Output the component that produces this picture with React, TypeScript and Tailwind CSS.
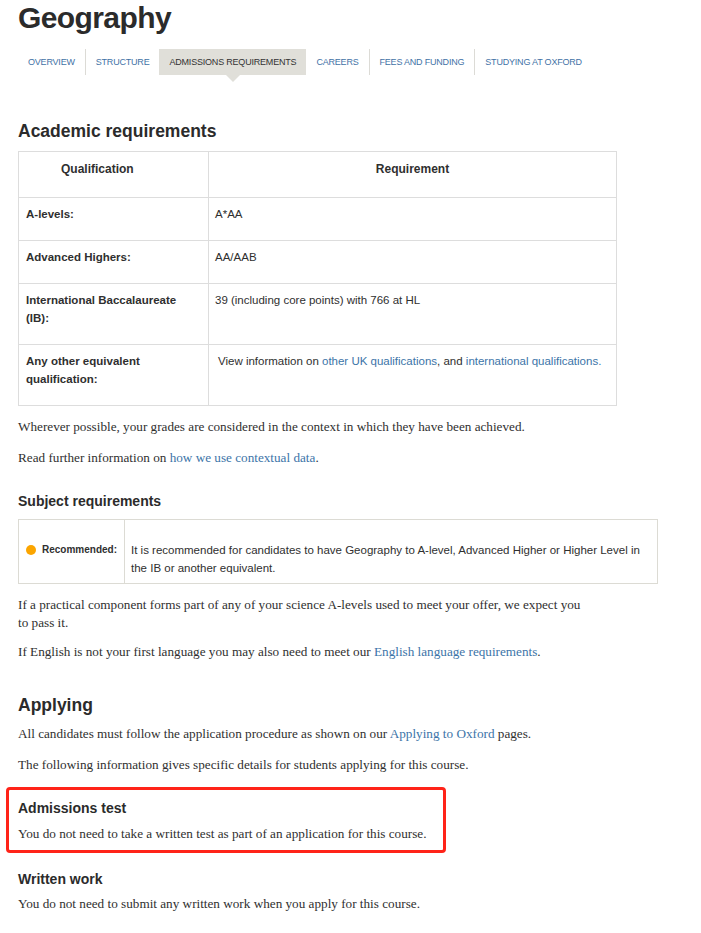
const sans = "font-['Liberation_Sans',Arial,sans-serif]";
const serif = "font-['Liberation_Serif','Times_New_Roman',serif]";

const tabs = [
  { label: "Overview", sep: true },
  { label: "Structure", sep: false },
  { label: "Admissions requirements", active: true, sep: false },
  { label: "Careers", sep: true },
  { label: "Fees and funding", sep: true },
  { label: "Studying at Oxford", sep: false },
];

const rows = [
  { q: ["A-levels:"], r: <>A*AA</>, h: "h-[43px]" },
  { q: ["Advanced Highers:"], r: <>AA/AAB</>, h: "h-[43px]" },
  {
    q: ["International Baccalaureate", "(IB):"],
    r: <>39 (including core points) with 766 at HL</>,
    h: "h-[61px]",
  },
  {
    q: ["Any other equivalent", "qualification:"],
    r: (
      <span className="pl-[3px]">
        View information on <a className="text-[#3c74a8]">other UK qualifications</a>, and{" "}
        <a className="text-[#3c74a8]">international qualifications.</a>
      </span>
    ),
    h: "h-[61px]",
  },
];

function Link({ children }: { children: React.ReactNode }) {
  return <a className="text-[#3c74a8] cursor-pointer">{children}</a>;
}

export default function App() {
  return (
    <div className="min-h-screen bg-white text-[#2f2f2f] pl-[18px] pr-4">
      <h1 className={`${sans} text-[30px] font-bold leading-[36px] tracking-[-0.6px] text-[#2b2b2b]`}>
        Geography
      </h1>

      {/* course tabs */}
      <nav className={`${sans} mt-[13px] flex h-[26px] items-stretch`}>
        {tabs.map((t) => (
          <div key={t.label} className="flex items-stretch">
            <div
              className={`relative flex items-center px-[10px] pt-px text-[9px] tracking-[-0.2px] uppercase ${
                t.active ? "bg-[#e0dfd9] text-[#333]" : "text-[#3f72a6]"
              }`}
            >
              {t.label}
              {t.active && (
                <span className="absolute left-1/2 top-full -translate-x-1/2 border-x-[7px] border-t-[7px] border-x-transparent border-t-[#e0dfd9]" />
              )}
            </div>
            {t.sep && <div className="w-px bg-[#dcdbd6]" />}
          </div>
        ))}
      </nav>

      <h2 className={`${sans} mt-[44px] text-[17.5px] font-bold leading-[24px] text-[#2b2b2b]`}>
        Academic requirements
      </h2>

      <table className={`${sans} mt-[8px] w-[599px] border-collapse text-[11.5px] leading-[18px]`}>
        <thead>
          <tr className="h-[46px]">
            <th className="w-[190px] border border-[#dddddd] pl-[24px] pt-[8px] text-left align-top text-[12px] font-bold">
              <span className="ml-[18px]">Qualification</span>
            </th>
            <th className="border border-[#dddddd] pt-[8px] text-center align-top text-[12px] font-bold">
              Requirement
            </th>
          </tr>
        </thead>
        <tbody>
          {rows.map((row) => (
            <tr key={row.q[0]} className={row.h}>
              <td className="border border-[#dddddd] px-[7px] pt-[7px] align-top font-bold">
                {row.q.map((l) => (
                  <div key={l}>{l}</div>
                ))}
              </td>
              <td className="border border-[#dddddd] px-[6px] pt-[7px] align-top">{row.r}</td>
            </tr>
          ))}
        </tbody>
      </table>

      <div className={`${serif} text-[13.2px] leading-[18px]`}>
        <p className="mt-[12px]">
          Wherever possible, your grades are considered in the context in which they have been achieved.
        </p>
        <p className="mt-[13px]">
          Read further information on <Link>how we use contextual data</Link>.
        </p>
      </div>

      <h3 className={`${sans} mt-[23px] text-[14px] font-bold leading-[22px] text-[#2b2b2b]`}>
        Subject requirements
      </h3>

      <table className={`${sans} mt-[7px] w-[640px] border-collapse text-[11.5px] leading-[18px]`}>
        <tbody>
          <tr className="h-[64px]">
            <td className="w-[106px] border border-[#dcdbd4] pl-[7px] pt-[21px] align-top">
              <div className="flex items-center gap-[6px] text-[10px] font-bold">
                <span className="h-[10px] w-[10px] rounded-full bg-[#fba500]" />
                Recommended:
              </div>
            </td>
            <td className="border border-[#dcdbd4] pl-[6px] pt-[21px] pb-[6px] align-top">
              It is recommended for candidates to have Geography to A-level, Advanced Higher or Higher Level in
              <br />
              the IB or another equivalent.
            </td>
          </tr>
        </tbody>
      </table>

      <div className={`${serif} text-[13.2px] leading-[18px]`}>
        <p className="mt-[12px]">
          If a practical component forms part of any of your science A-levels used to meet your offer, we expect you
          <br />
          to pass it.
        </p>
        <p className="mt-[11px]">
          If English is not your first language you may also need to meet our <Link>English language requirements</Link>.
        </p>
      </div>

      <h2 className={`${sans} mt-[31px] text-[17.5px] font-bold leading-[26px] text-[#2b2b2b]`}>Applying</h2>

      <div className={`${serif} text-[13.2px] leading-[18px]`}>
        <p className="mt-[7px]">
          All candidates must follow the application procedure as shown on our <Link>Applying to Oxford</Link> pages.
        </p>
        <p className="mt-[13px]">The following information gives specific details for students applying for this course.</p>
      </div>

      <section className="mt-[13px] -ml-[12px] w-[440px] rounded-[4px] border-[3px] border-[#ff2318] pl-[9px] pt-[9px] pb-[7px]">
        <h3 className={`${sans} text-[14px] font-bold leading-[18px] text-[#2b2b2b]`}>Admissions test</h3>
        <p className={`${serif} mt-[8px] text-[13.2px] leading-[18px]`}>
          You do not need to take a written test as part of an application for this course.
        </p>
      </section>

      <h3 className={`${sans} mt-[17px] text-[14px] font-bold leading-[18px] text-[#2b2b2b]`}>Written work</h3>
      <p className={`${serif} mt-[7px] text-[13.2px] leading-[18px]`}>
        You do not need to submit any written work when you apply for this course.
      </p>
    </div>
  );
}
